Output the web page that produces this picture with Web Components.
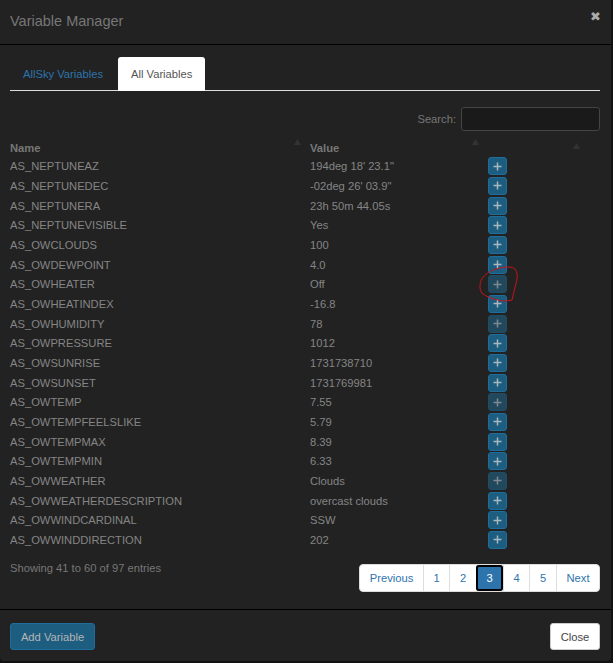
<!DOCTYPE html>
<html>
<head>
<meta charset="utf-8">
<title>Variable Manager</title>
<style>
  html, body { margin: 0; height: 100%; background: #111; }
  body { font: 11.2px "Liberation Sans", Arial, sans-serif; color: #858585; overflow: hidden; }
</style>
</head>
<body>
<var-modal title="Variable Manager">
  <var-tabs></var-tabs>
  <var-search></var-search>
  <var-table></var-table>
  <var-footer-info></var-footer-info>
</var-modal>

<script>
const variables = [
  ["AS_NEPTUNEAZ", "194deg 18' 23.1\""],
  ["AS_NEPTUNEDEC", "-02deg 26' 03.9\""],
  ["AS_NEPTUNERA", "23h 50m 44.05s"],
  ["AS_NEPTUNEVISIBLE", "Yes"],
  ["AS_OWCLOUDS", "100"],
  ["AS_OWDEWPOINT", "4.0"],
  ["AS_OWHEATER", "Off", true],
  ["AS_OWHEATINDEX", "-16.8"],
  ["AS_OWHUMIDITY", "78", true],
  ["AS_OWPRESSURE", "1012"],
  ["AS_OWSUNRISE", "1731738710"],
  ["AS_OWSUNSET", "1731769981"],
  ["AS_OWTEMP", "7.55", true],
  ["AS_OWTEMPFEELSLIKE", "5.79"],
  ["AS_OWTEMPMAX", "8.39"],
  ["AS_OWTEMPMIN", "6.33"],
  ["AS_OWWEATHER", "Clouds", true],
  ["AS_OWWEATHERDESCRIPTION", "overcast clouds"],
  ["AS_OWWINDCARDINAL", "SSW"],
  ["AS_OWWINDDIRECTION", "202"]
];

class VarModal extends HTMLElement {
  constructor() {
    super();
    this.attachShadow({ mode: 'open' });
    this.shadowRoot.innerHTML = `
      <style>
        :host { display: flex; flex-direction: column; width: 611px; height: 661px; background: #222; box-sizing: border-box; border-radius: 0 0 4px 4px; }
        header { height: 45px; box-sizing: border-box; border-bottom: 1px solid #000; display: flex; justify-content: space-between; padding: 11px 10px 0 10px; }
        h4 { margin: 0; font-size: 14.5px; font-weight: 400; line-height: 20px; color: #777; }
        .close { font-size: 13px; font-weight: 700; line-height: 12px; color: #aaa; font-family: "DejaVu Sans", sans-serif; }
        main { flex: 1; padding: 12px 11px 0 10px; }
        footer { height: 52px; box-sizing: border-box; border-top: 1px solid #000; padding: 13px 11px 0 10px; display: flex; justify-content: space-between; align-items: flex-start; }
        button { font: 11.2px "Liberation Sans", Arial, sans-serif; height: 27px; border-radius: 3px; padding: 0; white-space: nowrap; }
        .add { background: #1c5d80; border: 1px solid #1f6d9c; color: #b5b5b5; width: 85px; }
        .dismiss { background: #fff; border: 1px solid #ccc; color: #444; width: 50px; }
      </style>
      <header><h4>${this.getAttribute('title')}</h4><span class="close">✖</span></header>
      <main><slot></slot></main>
      <footer><button class="add">Add Variable</button><button class="dismiss">Close</button></footer>
    `;
  }
}

class VarTabs extends HTMLElement {
  constructor() {
    super();
    this.attachShadow({ mode: 'open' });
    this.shadowRoot.innerHTML = `
      <style>
        :host { display: flex; height: 33px; border-bottom: 1px solid #ddd; gap: 2px; white-space: nowrap; }
        a { display: flex; align-items: center; padding: 0 13px; height: 33px; box-sizing: border-box; border-radius: 3px 3px 0 0; color: #2d74ad; }
        a.on { background: #fff; color: #555; height: 34px; width: 87px; }
      </style>
      <a>AllSky Variables</a><a class="on">All Variables</a>
    `;
  }
}

class VarSearch extends HTMLElement {
  constructor() {
    super();
    this.attachShadow({ mode: 'open' });
    this.shadowRoot.innerHTML = `
      <style>
        :host { display: flex; justify-content: flex-end; align-items: center; gap: 5px; margin-top: 16px; height: 24px; color: #777; }
        input { width: 139px; height: 24px; box-sizing: border-box; background: #1a1a1a; border: 1px solid #444; border-radius: 3px; padding: 0; }
      </style>
      <label>Search:</label><input type="text">
    `;
  }
}

class VarRow extends HTMLElement {
  constructor() {
    super();
    this.attachShadow({ mode: 'open' });
    this.shadowRoot.innerHTML = `
      <style>
        :host { display: grid; grid-template-columns: 300px 178px 1fr; align-items: center; height: 19.68px; white-space: nowrap; }
        .plus { width: 19px; height: 18px; box-sizing: border-box; background: #1c5d80; border: 1px solid #1f6d9c; border-radius: 3px; display: flex; align-items: center; justify-content: center; color: #aab7be; }
        :host([dim]) .plus { background: #21485c; border-color: #214c62; color: #7f8a90; }
        svg { display: block; }
      </style>
      <div><slot name="name"></slot></div>
      <div><slot name="value"></slot></div>
      <div class="plus"><svg width="9" height="9" viewBox="0 0 9 9"><path d="M3.75 0.5h1.5v3.25h3.25v1.5h-3.25v3.25h-1.5v-3.25h-3.25v-1.5h3.25z" fill="currentColor"/></svg></div>
    `;
  }
}

class VarTable extends HTMLElement {
  constructor() {
    super();
    this.attachShadow({ mode: 'open' });
    const arrow = '<svg width="7" height="6" viewBox="0 0 7 6"><path d="M3.5 0L7 6H0z" fill="#333"/></svg>';
    this.shadowRoot.innerHTML = `
      <style>
        :host { display: block; margin-top: 8.4px; position: relative; }
        .head { display: grid; grid-template-columns: 300px 178px 1fr; height: 17px; font-weight: 700; color: #777; align-items: center; }
        .cell { display: flex; justify-content: space-between; padding-right: 9px; }
        svg { display: block; margin-top: -3px; }
        .last { display: flex; justify-content: flex-end; padding-right: 20px; }
        .mark { position: absolute; left: 460px; top: 121px; margin: 0; }
      </style>
      <div class="head">
        <div class="cell"><span>Name</span>${arrow}</div>
        <div class="cell"><span>Value</span>${arrow}</div>
        <div class="last">${arrow}</div>
      </div>
      <slot></slot>
      <svg class="mark" width="60" height="50" viewBox="0 0 180 150"><path d="M100 22C112 20 128 20 135 27C142 36 143 50 140 62C136 80 130 100 126 120C115 123 100 124 88 121C70 117 48 110 36 100C29 90 28 76 33 62C38 48 55 36 70 30C80 26 90 24 100 22Z" fill="none" stroke="#c8141c" stroke-width="3"/></svg>
    `;
  }
  connectedCallback() {
    variables.forEach(([name, value, dim]) => {
      const row = document.createElement('var-row');
      if (dim) row.setAttribute('dim', '');
      const a = document.createElement('span');
      a.slot = 'name';
      a.textContent = name;
      const b = document.createElement('span');
      b.slot = 'value';
      b.textContent = value;
      row.append(a, b);
      this.appendChild(row);
    });
  }
}

class VarFooterInfo extends HTMLElement {
  constructor() {
    super();
    this.attachShadow({ mode: 'open' });
    const pages = [['Previous', 63], ['1', 26], ['2', 27], ['3', 27], ['4', 26], ['5', 27], ['Next', 43]];
    this.shadowRoot.innerHTML = `
      <style>
        :host { display: flex; justify-content: space-between; align-items: flex-start; margin-top: 12px; }
        .info { color: #777; }
        nav { display: flex; height: 28px; margin-top: 2px; background: #fff; border-radius: 4px; border: 1px solid #ddd; box-sizing: border-box; }
        a { display: flex; align-items: center; justify-content: center; color: #2d74ad; border-left: 1px solid #ddd; box-sizing: border-box; }
        a:first-child { border-left: 0; }
        a.on { background: #2d74ad; color: #fff; outline: 2px solid #000; outline-offset: -2px; border: 0; border-radius: 3px; }
      </style>
      <div class="info">Showing 41 to 60 of 97 entries</div>
      <nav>${pages.map(([p, w]) => `<a class="${p === '3' ? 'on' : ''}" style="width:${w}px">${p}</a>`).join('')}</nav>
    `;
  }
}

customElements.define('var-modal', VarModal);
customElements.define('var-tabs', VarTabs);
customElements.define('var-search', VarSearch);
customElements.define('var-row', VarRow);
customElements.define('var-table', VarTable);
customElements.define('var-footer-info', VarFooterInfo);
</script>
</body>
</html>
